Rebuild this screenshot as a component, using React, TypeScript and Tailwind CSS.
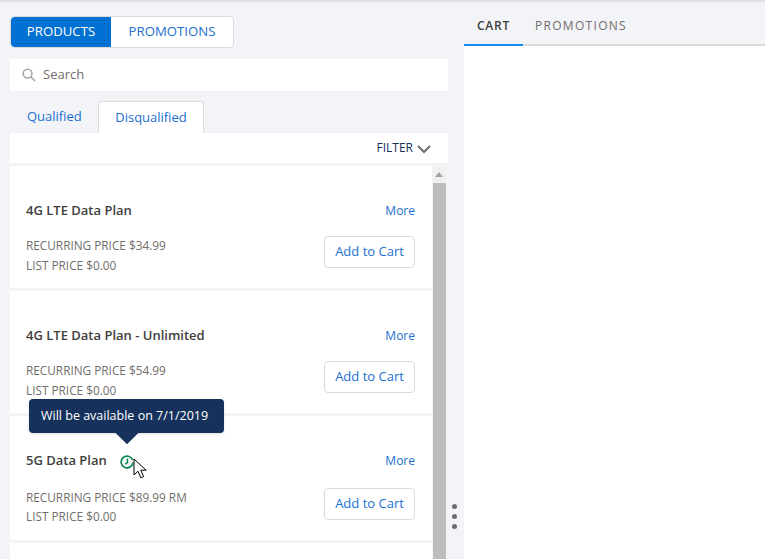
import React from 'react';

interface Product {
    name: string;
    recurring: string;
    height: string;
    rowGap: string;
    prices: string;
    scheduled?: boolean;
}

const products: Product[] = [
    { name: '4G LTE Data Plan', recurring: '$34.99', height: 'h-[122px]', rowGap: 'mt-[16px]', prices: 'leading-[20px] -mt-px' },
    { name: '4G LTE Data Plan - Unlimited', recurring: '$54.99', height: 'h-[122px]', rowGap: 'mt-[16px]', prices: 'leading-[20px] -mt-px' },
    { name: '5G Data Plan', recurring: '$89.99 RM', height: 'h-[124px]', rowGap: 'mt-[18px]', prices: 'leading-[19px]', scheduled: true },
];

const ClockIcon = () => (
    <svg className="w-[14px] h-[14px] ml-[13px] mt-[2px]" viewBox="0 0 15 15" fill="none" stroke="#04844b">
        <path d="M13.4 5.2A6.3 6.3 0 1 0 13.8 8" strokeWidth="1.8" />
        <path d="M8 3.8v4.4L5.4 9.8" strokeWidth="1.6" />
    </svg>
);

const Cursor = () => (
    <svg className="absolute left-[133px] top-[458px]" width="15" height="22" viewBox="0 0 15 22">
        <path d="M1 1v16l4-3.8 2.8 6.6 2.8-1.2-2.8-6.4h5.4z" fill="#fff" stroke="#000" strokeWidth="1" />
    </svg>
);

const ProductCard = ({ product }: { product: Product }) => (
    <div className={`bg-white pl-4 pr-[17px] pt-9 shrink-0 ${product.height}`}>
        <div className="flex items-center justify-between h-[18px]">
            <div className="flex items-center">
                <span className="text-[13px] font-semibold text-[#3e3e3c]">{product.name}</span>
                {product.scheduled && <ClockIcon />}
            </div>
            <a className="text-[12px] text-[#1b6fd0]">More</a>
        </div>
        <div className={`flex items-start justify-between ${product.rowGap}`}>
            <div className={`text-[11.8px] text-[#706e6b] ${product.prices}`}>
                <div>RECURRING PRICE {product.recurring}</div>
                <div>LIST PRICE $0.00</div>
            </div>
            <button className="w-[91px] h-8 bg-white border border-[#dddbda] rounded text-[13px] text-[#1b6fd0]">
                Add to Cart
            </button>
        </div>
    </div>
);

export default function App() {
    return (
        <div className="relative h-[559px] overflow-hidden bg-[#f3f4f8] font-['Open_Sans',sans-serif]">
            <div className="h-[3px] bg-gradient-to-b from-[#d8d9dd] to-[#f3f4f8]" />
            <div className="flex h-[556px]">
                <div className="w-[438px] ml-2.5 pt-[13px] shrink-0">
                    <div className="flex w-[224px] h-8 bg-white border border-[#dddbda] rounded text-[13.2px]">
                        <div className="w-[100px] bg-[#0070d2] text-white rounded-l flex items-center justify-center font-medium">
                            PRODUCTS
                        </div>
                        <div className="flex-1 text-[#1b6fd0] flex items-center justify-center">PROMOTIONS</div>
                    </div>
                    <div className="mt-[11px] h-8 bg-white flex items-center pl-3 text-[13px] text-[#706e6b]">
                        <svg className="w-[14px] h-[14px] mr-[7px]" viewBox="0 0 14 14" fill="none" stroke="#a8a7a5" strokeWidth="1.6">
                            <circle cx="5.6" cy="5.6" r="4.4" />
                            <path d="M9 9l4 4" />
                        </svg>
                        Search
                    </div>
                    <div className="mt-2.5 h-8 flex items-end text-[13px] text-[#1b6fd0]">
                        <div className="w-[88px] h-8 flex items-center pl-[17px]">Qualified</div>
                        <div className="w-[106px] h-8 bg-white border border-b-0 border-[#dddbda] rounded-t flex items-center justify-center">
                            Disqualified
                        </div>
                    </div>
                    <div className="h-[30px] bg-white flex items-center justify-end pr-[17px] text-[12px] text-[#16325c]">
                        FILTER
                        <svg className="w-[14px] h-[9px] ml-1 mt-[2px]" viewBox="0 0 14 9" fill="none" stroke="#706e6b" strokeWidth="2">
                            <path d="M1 1l6 6 6-6" />
                        </svg>
                    </div>
                    <div className="flex mt-[3px] h-[393px]">
                        <div className="w-[422px] flex flex-col gap-[3px] overflow-hidden">
                            {products.map((product) => (
                                <ProductCard key={product.name} product={product} />
                            ))}
                            <div className="bg-white h-[20px] shrink-0" />
                        </div>
                        <div className="w-4 bg-[#f3f4f8] pr-0.5">
                            <div className="h-[17px] flex items-center justify-center bg-[#f1f1f1]">
                                <svg className="w-2 h-[5px]" viewBox="0 0 8 5"><path d="M4 0l4 5H0z" fill="#a3a3a3" /></svg>
                            </div>
                            <div className="ml-px h-[376px] bg-[#bdbdbd]" />
                        </div>
                    </div>
                </div>
                <div className="w-4 shrink-0 flex flex-col items-start pl-1 gap-[5px] pt-[501px]">
                    <span className="w-[5px] h-[5px] rounded-full bg-[#6b6d70]" />
                    <span className="w-[5px] h-[5px] rounded-full bg-[#6b6d70]" />
                    <span className="w-[5px] h-[5px] rounded-full bg-[#6b6d70]" />
                </div>
                <div className="flex-1 flex flex-col">
                    <div className="h-[43px] flex border-b-2 border-[#dddbda] text-[12px] pt-1">
                        <div className="w-[59px] -mb-[2px] -mt-1 pt-1 border-b-2 border-[#1589ee] flex items-center justify-center font-semibold tracking-[0.8px] text-[#3e3e3c]">
                            CART
                        </div>
                        <div className="ml-3 flex items-center tracking-[1.3px] text-[#706e6b]">PROMOTIONS</div>
                    </div>
                    <div className="flex-1 bg-white" />
                </div>
            </div>
            <div className="absolute left-[29px] top-[399px] w-[195px] h-[34px] bg-[#16325c] rounded text-white text-[12.5px] flex items-center pl-3 shadow">
                Will be available on 7/1/2019
                <span className="absolute left-[90px] top-[26px] w-4 h-4 rotate-45 bg-[#16325c]" />
            </div>
            <Cursor />
        </div>
    );
}
